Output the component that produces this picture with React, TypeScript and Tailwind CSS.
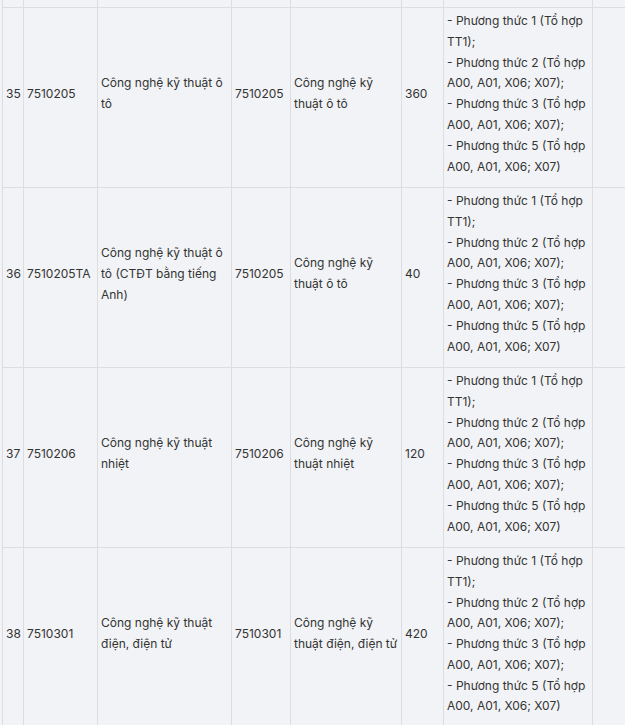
import React from "react";

const methods = [
  "- Phương thức 1 (Tổ hợp TT1);",
  "- Phương thức 2 (Tổ hợp A00, A01, X06; X07);",
  "- Phương thức 3 (Tổ hợp A00, A01, X06; X07);",
  "- Phương thức 5 (Tổ hợp A00, A01, X06; X07)",
];

const rows = [
  { stt: "35", code: "7510205", name: "Công nghệ kỹ thuật ô tô", code2: "7510205", name2: "Công nghệ kỹ thuật ô tô", quota: "360" },
  { stt: "36", code: "7510205TA", name: "Công nghệ kỹ thuật ô tô (CTĐT bằng tiếng Anh)", code2: "7510205", name2: "Công nghệ kỹ thuật ô tô", quota: "40" },
  { stt: "37", code: "7510206", name: "Công nghệ kỹ thuật nhiệt", code2: "7510206", name2: "Công nghệ kỹ thuật nhiệt", quota: "120" },
  { stt: "38", code: "7510301", name: "Công nghệ kỹ thuật điện, điện tử", code2: "7510301", name2: "Công nghệ kỹ thuật điện, điện tử", quota: "420" },
];

const td = "border border-[#dcdde0] pl-[3px] pr-[3px] pt-[3px] pb-[9.6px] align-middle";

export default function App() {
  return (
    <div
      className="w-[625px] h-[725px] overflow-hidden bg-[#f2f3f6] text-[#333333] text-[12px] leading-[20.8px]"
      style={{ fontFamily: "Inter, 'Noto Sans', sans-serif" }}
    >
      <div className="pl-[2px] -mt-[44px]">
        <table className="table-fixed border-collapse w-[680px]">
          <colgroup>
            <col className="w-[21px]" />
            <col className="w-[74px]" />
            <col className="w-[134px]" />
            <col className="w-[59px]" />
            <col className="w-[111px]" />
            <col className="w-[42px]" />
            <col className="w-[149px]" />
            <col className="w-[90px]" />
          </colgroup>
          <tbody>
            <tr className="h-[51px]">
              <td className={td}></td>
              <td className={td}></td>
              <td className={td}></td>
              <td className={td}></td>
              <td className={td}></td>
              <td className={td}></td>
              <td className={td}></td>
              <td className={td}></td>
            </tr>
            {rows.map((r) => (
              <tr key={r.stt}>
                <td className={td}>{r.stt}</td>
                <td className={td}>{r.code}</td>
                <td className={td}>{r.name}</td>
                <td className={td}>{r.code2}</td>
                <td className={td}>{r.name2}</td>
                <td className={td}>{r.quota}</td>
                <td className={td}>
                  {methods.map((m, i) => (
                    <div key={i}>{m}</div>
                  ))}
                </td>
                <td className={td}></td>
              </tr>
            ))}
          </tbody>
        </table>
      </div>
    </div>
  );
}
